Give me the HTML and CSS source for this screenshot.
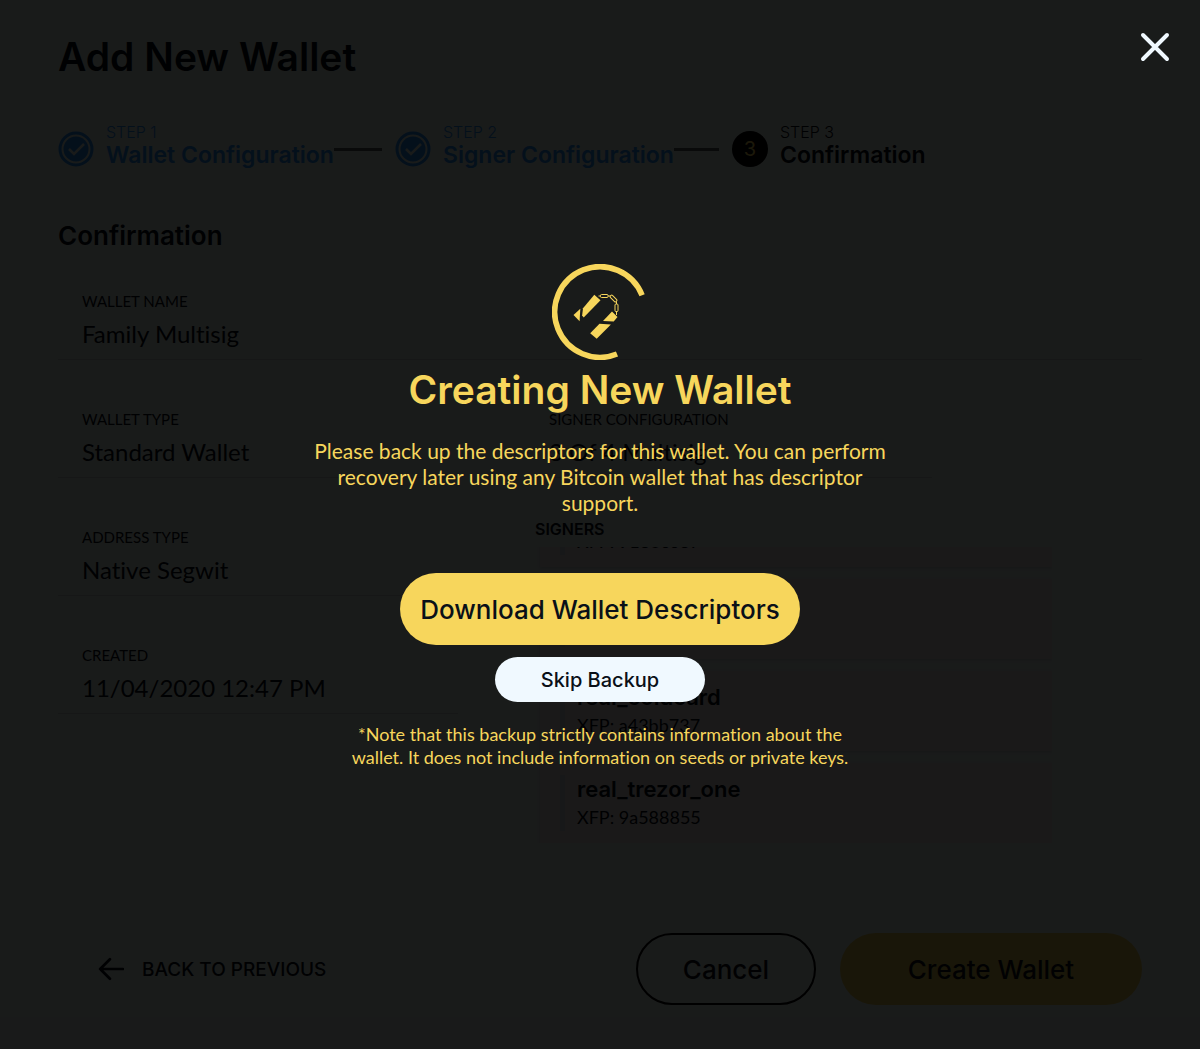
FILE: index.html
```html
<!DOCTYPE html>
<html lang="en">
  <head>
    <meta charset="utf-8">
    <title>Add New Wallet</title>
    <link rel="stylesheet" href="styles.css">
  </head>
  <body>
    <main class="page">
      <h1 class="page-title">Add New Wallet</h1>

      <ol class="steps">
        <li class="step step-done">
          <svg class="step-icon" viewBox="0 0 36 36" aria-hidden="true">
            <circle cx="18" cy="18" r="16" fill="none" stroke="currentColor" stroke-width="3"/>
            <circle cx="18" cy="18" r="12.5" fill="currentColor"/>
            <path d="M11 18l5 5 10-10" fill="none" stroke="#e4f0ec" stroke-width="2.5"/>
          </svg>
          <div class="step-text">
            <span class="step-number">STEP 1</span>
            <span class="step-name">Wallet Configuration</span>
          </div>
          <span class="step-line"></span>
        </li>
        <li class="step step-done">
          <svg class="step-icon" viewBox="0 0 36 36" aria-hidden="true">
            <circle cx="18" cy="18" r="16" fill="none" stroke="currentColor" stroke-width="3"/>
            <circle cx="18" cy="18" r="12.5" fill="currentColor"/>
            <path d="M11 18l5 5 10-10" fill="none" stroke="#e4f0ec" stroke-width="2.5"/>
          </svg>
          <div class="step-text">
            <span class="step-number">STEP 2</span>
            <span class="step-name">Signer Configuration</span>
          </div>
          <span class="step-line"></span>
        </li>
        <li class="step">
          <span class="step-icon step-current">3</span>
          <div class="step-text">
            <span class="step-number">STEP 3</span>
            <span class="step-name">Confirmation</span>
          </div>
        </li>
      </ol>

      <h2 class="section-title">Confirmation</h2>

      <div class="details">
        <dl class="field field-wide">
          <dt>Wallet Name</dt>
          <dd>Family Multisig</dd>
        </dl>
        <dl class="field">
          <dt>Wallet Type</dt>
          <dd>Standard Wallet</dd>
        </dl>
        <dl class="field field-config">
          <dt>Signer Configuration</dt>
          <dd>3 Of 4 Multisig</dd>
        </dl>
        <div class="details-left">
          <dl class="field">
            <dt>Address Type</dt>
            <dd>Native Segwit</dd>
          </dl>
          <dl class="field">
            <dt>Created</dt>
            <dd>11/04/2020 12:47 PM</dd>
          </dl>
        </div>
        <section class="signers">
          <h3 class="signers-title">SIGNERS</h3>
          <ul class="signer-list">
            <li class="signer">
              <div class="signer-body"><b>real_cobo</b><span>XFP: 9130c637</span></div>
            </li>
            <li class="signer">
              <div class="signer-body"><b>real_ledger</b><span>XFP: 4f60d1c9</span></div>
            </li>
            <li class="signer">
              <div class="signer-body"><b>real_coldcard</b><span>XFP: a43bb737</span></div>
            </li>
            <li class="signer">
              <div class="signer-body"><b>real_trezor_one</b><span>XFP: 9a588855</span></div>
            </li>
          </ul>
        </section>
      </div>

      <footer class="footer">
        <button class="back" type="button">
          <svg class="back-icon" viewBox="0 0 24 22" aria-hidden="true">
            <path d="M23 11H2M11 2l-9 9 9 9" fill="none" stroke="currentColor" stroke-width="2.5" stroke-linecap="round" stroke-linejoin="round"/>
          </svg>
          BACK TO PREVIOUS
        </button>
        <div class="footer-actions">
          <button class="button button-cancel" type="button">Cancel</button>
          <button class="button button-create" type="button">Create Wallet</button>
        </div>
      </footer>
    </main>

    <div class="overlay" role="dialog" aria-modal="true" aria-labelledby="modalTitle">
      <button class="close" type="button" aria-label="Close">
        <svg viewBox="0 0 30 30" aria-hidden="true">
          <path d="M3 3l24 24M27 3L3 27" stroke="currentColor" stroke-width="4" stroke-linecap="round"/>
        </svg>
      </button>

      <svg class="logo" viewBox="0 0 96 96" aria-hidden="true">
        <path d="M90.1 31.3A45.3 45.3 0 1 0 65 90" fill="none" stroke="currentColor" stroke-width="5.6"/>
        <g fill="currentColor">
          <path d="M21.5 51l6.8-6.2-.7 12.4z"/>
          <path d="M42.3 30.8l6.2 5.4-16.8 17.2-1.6-1.8.9-7.4z"/>
          <path d="M60 47.5l5.5 5.5-3.8 4.6-10.7-.6z"/>
          <path d="M47.5 59.7l11.4.9-14.2 14.2-6.5-5.5z"/>
        </g>
        <g fill="none" stroke="currentColor" stroke-width="1">
          <rect x="48.5" y="30.5" width="7.5" height="3" rx="1"/>
          <rect x="57.5" y="33" width="8" height="3" rx="1" transform="rotate(45 61.5 34.5)"/>
          <rect x="63" y="40" width="3" height="7.5" rx="1"/>
          <path d="M46.5 32h2M56 32h2.5M64.5 37.5V40M64.5 47.5V51"/>
        </g>
      </svg>
      <h2 class="modal-title" id="modalTitle">Creating New Wallet</h2>
      <p class="modal-text">Please back up the descriptors for this wallet. You can perform recovery later using any Bitcoin wallet that has descriptor support.</p>
      <button class="button button-download" type="button">Download Wallet Descriptors</button>
      <button class="button button-skip" type="button">Skip Backup</button>
      <p class="modal-note">*Note that this backup strictly contains information about the wallet. It does not include information on seeds or private keys.</p>
    </div>
  </body>
</html>
```
FILE: styles.css
```css
* {
  box-sizing: border-box;
}

body {
  margin: 0;
  background: #e4f0ec;
  color: #050a12;
  font-family: Lato, "Liberation Sans", sans-serif;
  font-variant-ligatures: none;
  position: relative;
}

h1, h2, h3, p, dl, dd, ol, ul {
  margin: 0;
  padding: 0;
}

ol, ul {
  list-style: none;
}

button {
  font-family: Inter, "Liberation Sans", sans-serif;
  cursor: pointer;
}

.page {
  min-height: 100vh;
  padding: 33px 58px 44px;
}

.page-title, .section-title, .modal-title {
  font-family: Inter, "Liberation Sans", sans-serif;
  font-weight: 600;
}

.page-title, .modal-title {
  font-size: 39px;
  line-height: 48px;
}

/* Progress steps */
.steps {
  display: flex;
  margin-top: 41px;
  font-family: Inter, "Liberation Sans", sans-serif;
}

.step {
  flex: 0 1 337px;
  display: flex;
  align-items: center;
}

.step-icon {
  flex: none;
  width: 36px;
  height: 36px;
  margin-right: 12px;
}

.step-text {
  display: flex;
  flex-direction: column;
  padding-bottom: 8px;
  white-space: nowrap;
}

.step-number {
  font-size: 16px;
  line-height: 20px;
  font-weight: 300;
}

.step-name {
  font-size: 23px;
  line-height: 26px;
  font-weight: 600;
}

.step-done {
  color: #2492f4;
}

.step-line {
  flex: 1;
  height: 3px;
  margin-right: 13px;
  background: #505a60;
}

.step-current {
  display: flex;
  align-items: center;
  justify-content: center;
  border-radius: 50%;
  background: #000;
  color: #f7d65c;
  font-size: 20px;
}

.section-title {
  margin-top: 44px;
  font-size: 26px;
  line-height: 32px;
}

/* Wallet details */
.details {
  display: grid;
  grid-template-columns: 400fr 617fr;
  gap: 32px 67px;
  margin-top: 22px;
}

.field {
  padding: 15px 24px 9px;
  border-bottom: 1px solid #c4d0cc;
}

.field-wide {
  grid-column: 1 / -1;
}

.field-config {
  width: 66%;
}

.field dt {
  margin-bottom: 5px;
  font-size: 15px;
  line-height: 24px;
  text-transform: uppercase;
}

.field dd {
  font-size: 24px;
  line-height: 32px;
}

.details-left {
  display: flex;
  flex-direction: column;
  gap: 32px;
}

.signers {
  padding: 9px 90px 0 10px;
}

.signers-title {
  font-family: Inter, "Liberation Sans", sans-serif;
  font-size: 16px;
  line-height: 20px;
  font-weight: 600;
}

.signer-list {
  display: flex;
  flex-direction: column;
  justify-content: flex-end;
  gap: 12px;
  height: 296px;
  padding-left: 5px;
  margin-top: 8px;
  overflow: hidden;
}

.signer {
  flex: none;
  padding: 12px 20px;
  background: #e6e2e2;
  box-shadow: 0 1px 3px #c0ccd0;
}

.signer-body {
  display: flex;
  flex-direction: column;
  padding-left: 12px;
  border-left: 5px solid #d2d4de;
}

.signer b {
  font-family: Inter, "Liberation Sans", sans-serif;
  font-size: 22px;
  line-height: 28px;
  font-weight: 600;
}

.signer span {
  font-size: 18px;
  line-height: 28px;
}

/* Bottom actions */
.footer {
  display: flex;
  align-items: center;
  justify-content: space-between;
  margin-top: 90px;
  padding-left: 40px;
}

.back {
  display: flex;
  align-items: center;
  gap: 18px;
  padding: 0;
  border: 0;
  background: none;
  color: inherit;
  font-size: 19px;
  font-weight: 500;
}

.back-icon {
  width: 26px;
  height: 24px;
}

.footer-actions {
  display: flex;
  gap: 24px;
}

.button {
  height: 72px;
  border: 0;
  border-radius: 36px;
  color: #0a1018;
  font-size: 26px;
  font-weight: 500;
}

.button-cancel {
  width: 180px;
  border: 2px solid #000;
  background: none;
}

.button-create {
  width: 302px;
  background: #e0c850;
}

/* Backup dialog */
.overlay {
  position: absolute;
  inset: 0;
  display: flex;
  flex-direction: column;
  align-items: center;
  padding: 264px 24px 24px;
  background: rgba(0, 0, 0, 0.89);
  color: #f7d65c;
  text-align: center;
}

.close {
  position: absolute;
  top: 32px;
  right: 30px;
  width: 30px;
  height: 30px;
  padding: 0;
  border: 0;
  background: none;
  color: #f0f9ff;
}

.close svg {
  display: block;
}

.logo {
  flex: none;
  width: 96px;
  height: 96px;
}

.modal-title {
  margin-top: 6px;
}

.modal-text {
  max-width: 576px;
  margin-top: 24px;
  font-size: 21px;
  line-height: 26px;
}

.button-download {
  margin-top: 57px;
  padding: 0 20px;
  background: #f7d65c;
}

.button-skip {
  height: 45px;
  margin-top: 12px;
  padding: 0 46px;
  background: #f0f9ff;
  font-size: 20px;
}

.modal-note {
  max-width: 512px;
  margin-top: 21px;
  font-size: 18px;
  line-height: 23px;
}
```
